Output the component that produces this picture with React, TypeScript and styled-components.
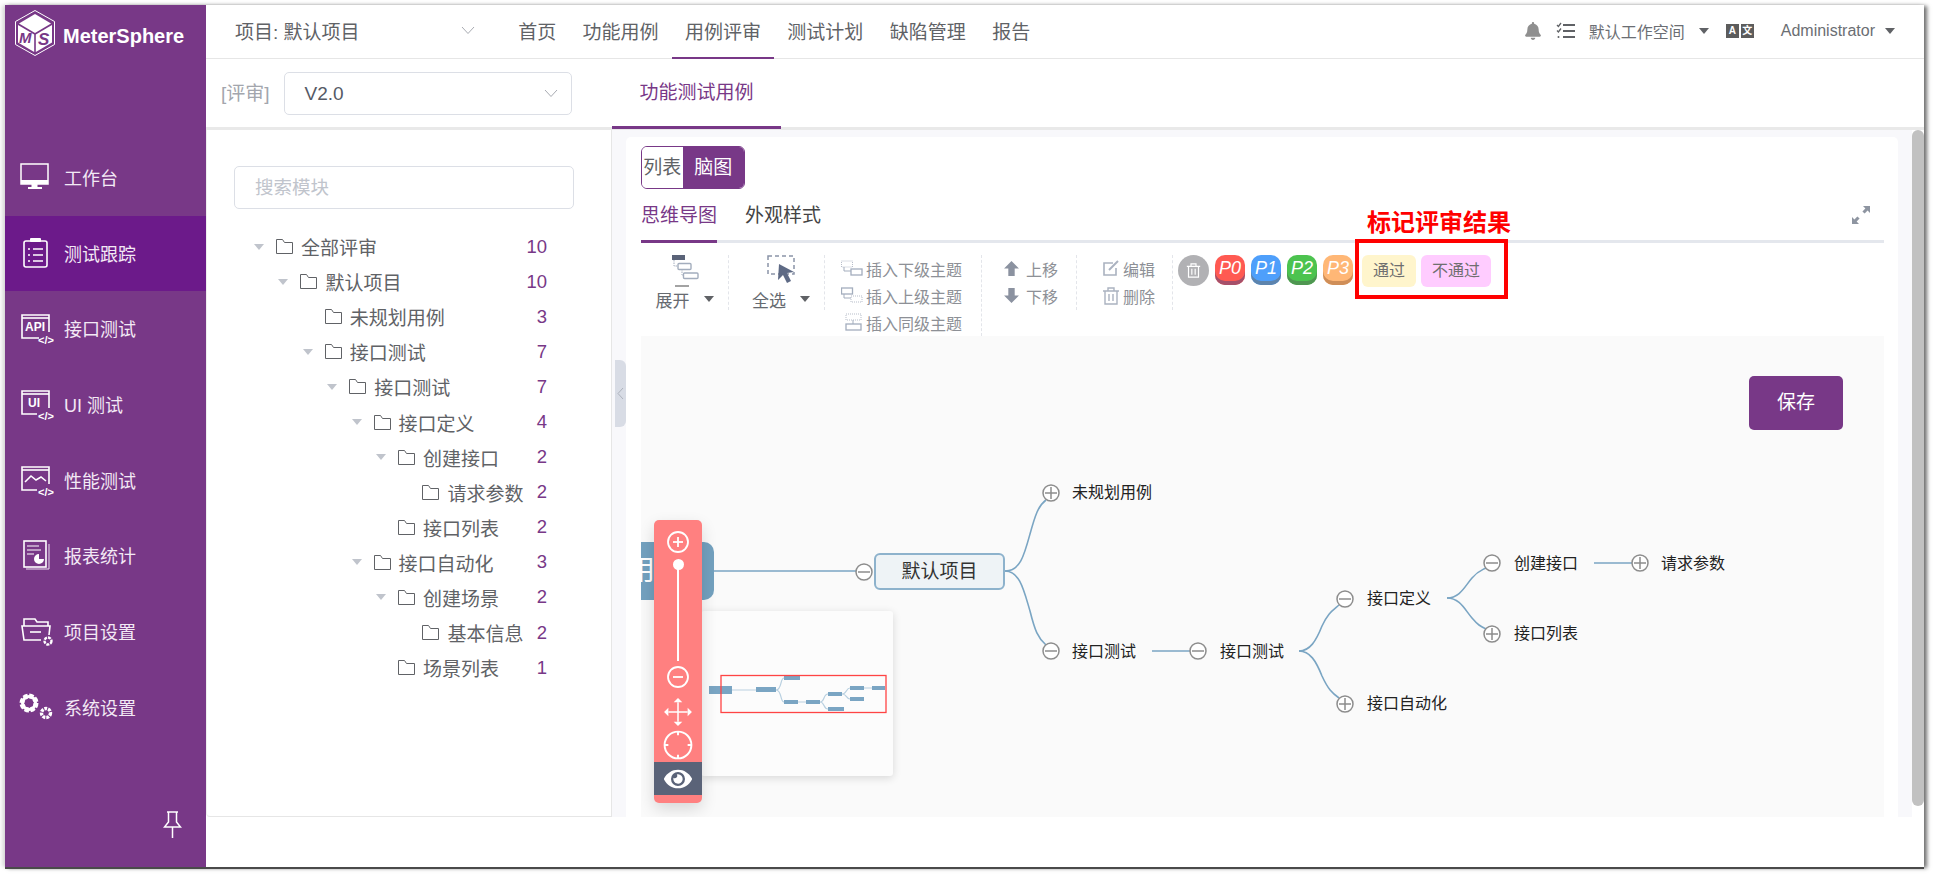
import React from "react";
import styled, { createGlobalStyle } from "styled-components";
import { FaBell, FaEye } from "react-icons/fa";

const PURPLE = "#783887";
const LINE = "#7aa5c3";

const GlobalStyle = createGlobalStyle`
  html, body { margin: 0; padding: 0; background: #fff; }
  body { font-family: "Liberation Sans", "Noto Sans CJK SC", sans-serif; color: #606266; }
  * { box-sizing: border-box; }
`;

const Page = styled.div`
  width: 1933px;
  height: 876px;
  padding: 5px 9px 9px 5px;
  background: #fff;
  overflow: hidden;
`;

const Frame = styled.div`
  display: flex;
  width: 1919px;
  height: 862px;
  background: #fff;
  box-shadow: 0 2px 0 #4a4a4a, 3px 1px 4px #6f6f6f, -3px 0 4px #dcdcdc;
`;

/* sidebar */
const Sidebar = styled.aside`
  width: 201px;
  flex: none;
  display: flex;
  flex-direction: column;
  background: ${PURPLE};
`;

const LogoRow = styled.div`
  height: 135px;
  flex: none;
  display: flex;
  align-items: flex-start;
  padding: 5px 0 0 10px;
  gap: 8px;
`;

const LogoText = styled.span`
  font-size: 20px;
  font-weight: 700;
  color: #fff;
  line-height: 54px;
  margin-top: -1px;
`;

const MenuItem = styled.div<{ $active?: boolean }>`
  height: 75.7px;
  flex: none;
  display: flex;
  align-items: center;
  gap: 10px;
  padding: 0 0 2px 12px;
  font-size: 18px;
  color: #f3e9f5;
  background: ${(p) => (p.$active ? "#6c1a8a" : "transparent")};
`;

const PinBox = styled.div`
  margin-top: auto;
  align-self: flex-end;
  padding: 0 24px 28px 0;
  height: 56px;
`;

/* main column */
const Main = styled.div`
  flex: 1;
  min-width: 0;
  display: flex;
  flex-direction: column;
`;

const Header = styled.header`
  height: 54px;
  flex: none;
  display: flex;
  align-items: stretch;
  border-bottom: 1px solid #e6e6e6;
`;

const ProjectPick = styled.div`
  width: 299px;
  display: flex;
  align-items: center;
  justify-content: space-between;
  padding: 0 30px 2px 29px;
  font-size: 19px;
`;

const NavItem = styled.div<{ $active?: boolean }>`
  padding: 0 13.2px 2px;
  display: flex;
  align-items: center;
  font-size: 19px;
  margin-bottom: -1px;
  color: #606266;
  border-bottom: 2px solid ${(p) => (p.$active ? PURPLE : "transparent")};
`;

const HeaderRight = styled.div`
  margin-left: auto;
  display: flex;
  align-items: center;
  font-size: 16px;
  color: #6b6e73;
  padding: 0 29px 2px 0;
`;

const Caret = styled.i<{ $gap?: number }>`
  display: inline-block;
  width: 0;
  height: 0;
  margin-left: ${(p) => p.$gap ?? 0}px;
  border-left: 5.5px solid transparent;
  border-right: 5.5px solid transparent;
  border-top: 6px solid #606266;
`;

const LangBox = styled.div`
  display: flex;
  gap: 2px;
  margin: 0 27px 0 17px;
`;

const LangCell = styled.span`
  width: 13px;
  height: 14px;
  background: #5c5c5c;
  color: #fff;
  font-size: 10px;
  font-weight: 700;
  line-height: 14px;
  text-align: center;
`;

const SubBar = styled.div`
  height: 71px;
  flex: none;
  display: flex;
  border-bottom: 3px solid #e9e9e9;
`;

const VersionArea = styled.div`
  width: 406px;
  display: flex;
  align-items: flex-start;
  padding: 13px 0 0 15px;
  gap: 14px;
`;

const VersionLabel = styled.span`
  font-size: 19px;
  line-height: 43px;
  color: #a3a6ad;
`;

const VersionSelect = styled.div`
  width: 288px;
  height: 43px;
  display: flex;
  align-items: center;
  justify-content: space-between;
  padding: 0 13px 0 20px;
  border: 1px solid #dcdfe6;
  border-radius: 5px;
  font-size: 19px;
  color: #555a66;
`;

const SubTab = styled.div`
  width: 169px;
  height: 70px;
  margin-bottom: -2px;
  display: flex;
  align-items: center;
  justify-content: center;
  padding-bottom: 4px;
  font-size: 19px;
  color: ${PURPLE};
  border-bottom: 3px solid ${PURPLE};
`;

const Body = styled.div`
  flex: 1;
  display: flex;
  align-items: flex-start;
  position: relative;
`;

/* left tree */
const TreePanel = styled.section`
  width: 406px;
  height: 687px;
  flex: none;
  padding: 36px 37px 0 27px;
  border-right: 1px solid #e6e6e6;
  border-bottom: 1px solid #e6e6e6;
  border-left: 1px solid #eeeeee;
  border-bottom-left-radius: 4px;
`;

const SearchBox = styled.div`
  height: 43px;
  padding-left: 20px;
  border: 1px solid #dcdfe6;
  border-radius: 5px;
  font-size: 18.5px;
  line-height: 41px;
  color: #c0c4cc;
`;

const Tree = styled.div`
  margin-top: 20px;
  padding-right: 27px;
`;

const TreeRow = styled.div<{ $level: number }>`
  height: 35.1px;
  display: flex;
  align-items: center;
  padding-left: ${(p) => 20 + p.$level * 24.4}px;
  font-size: 19px;
`;

const TreeArrow = styled.i<{ $hidden?: boolean }>`
  width: 0;
  height: 0;
  flex: none;
  margin-right: 12px;
  border-left: 5.5px solid transparent;
  border-right: 5.5px solid transparent;
  border-top: 6px solid ${(p) => (p.$hidden ? "transparent" : "#c0c4cc")};
`;

const TreeName = styled.span`
  margin-left: 8px;
  white-space: nowrap;
`;

const TreeCount = styled.span`
  margin-left: auto;
  color: ${PURPLE};
  font-size: 18.5px;
`;

const CollapseHandle = styled.div`
  position: absolute;
  left: 409px;
  top: 230px;
  width: 11px;
  height: 67px;
  display: flex;
  align-items: center;
  justify-content: center;
  background: #d8dce5;
  border-radius: 0 6px 6px 0;
`;

/* right side */
const CardWrap = styled.section`
  flex: 1;
  min-width: 0;
  height: 687px;
  padding: 7px 14px 0 14px;
  background: #f8f8fb;
`;

const Card = styled.div`
  height: 680px;
  display: flex;
  flex-direction: column;
  padding: 9px 14px 0 15px;
  background: #fff;
  border-radius: 5px 5px 0 0;
`;

const Toggle = styled.div`
  width: 104px;
  height: 43px;
  flex: none;
  display: flex;
  border: 1px solid ${PURPLE};
  border-radius: 6px;
  overflow: hidden;
  font-size: 19px;
  line-height: 41px;
`;

const ToggleOption = styled.span<{ $on?: boolean }>`
  text-align: center;
  width: ${(p) => (p.$on ? 62 : 41)}px;
  color: ${(p) => (p.$on ? "#fff" : "#606266")};
  background: ${(p) => (p.$on ? PURPLE : "#fff")};
`;

const TabRow = styled.div`
  height: 54px;
  flex: none;
  display: flex;
  align-items: center;
  gap: 28px;
  padding-right: 14px;
  border-bottom: 3px solid #e4e7ed;
`;

const MapTab = styled.div<{ $on?: boolean }>`
  height: 54px;
  margin-bottom: -3px;
  display: flex;
  align-items: center;
  padding-bottom: 3px;
  font-size: 19px;
  color: ${(p) => (p.$on ? PURPLE : "#444")};
  border-bottom: 3px solid ${(p) => (p.$on ? PURPLE : "transparent")};
`;

const ExpandIcon = styled.div`
  margin-left: auto;
  display: flex;
`;

const Toolbar = styled.div`
  height: 93px;
  flex: none;
  display: flex;
  align-items: flex-start;
  position: relative;
  padding-top: 12px;
  font-size: 16px;
  color: #8d9096;
`;

const ToolGroup = styled.div<{ $w: number; $tall?: boolean }>`
  width: ${(p) => p.$w}px;
  height: ${(p) => (p.$tall ? 81 : 55)}px;
  flex: none;
  border-right: 1px dashed #e3e5ea;
`;

const BigTool = styled(ToolGroup)<{ $shift?: number }>`
  display: flex;
  flex-direction: column;
  align-items: center;
  padding-left: ${(p) => p.$shift ?? 0}px;
  font-size: 17px;
  color: #666a70;
`;

const BigToolLabel = styled.div`
  display: flex;
  align-items: center;
  gap: 14px;
  height: 20px;
  margin-top: 1px;
`;

const InsertGroup = styled(ToolGroup)`
  display: flex;
  flex-direction: column;
  align-items: flex-end;
  padding: 0 19px 0 0;
`;

const ToolLine = styled.div`
  height: 27px;
  display: flex;
  align-items: center;
  gap: 3px;
  white-space: nowrap;
`;

const MoveGroup = styled(ToolGroup)<{ $shift: number }>`
  display: flex;
  flex-direction: column;
  align-items: center;
  padding: 0 0 0 ${(p) => p.$shift}px;
`;

const PriorityRow = styled.div`
  display: flex;
  align-items: flex-start;
  padding-left: 5px;
  gap: 6px;
`;

const TrashButton = styled.div`
  width: 31px;
  height: 31px;
  border-radius: 50%;
  background: #b1b1b4;
  display: flex;
  align-items: center;
  justify-content: center;
`;

const PriorityTag = styled.div<{ $bg: string; $edge: string }>`
  width: 30px;
  height: 30px;
  border-radius: 10px;
  background: ${(p) => p.$bg};
  box-shadow: inset 0 -4px 0 ${(p) => p.$edge};
  color: #fff;
  font-size: 18px;
  font-style: italic;
  line-height: 26px;
  text-align: center;
`;

const ResultTag = styled.div<{ $bg: string; $w: number; $gap: number }>`
  width: ${(p) => p.$w}px;
  height: 32px;
  margin-left: ${(p) => p.$gap}px;
  background: ${(p) => p.$bg};
  border-radius: 6px;
  font-size: 16px;
  line-height: 32px;
  text-align: center;
  color: #6f6f6f;
`;

const NoteBox = styled.div`
  position: absolute;
  left: 714px;
  top: -4px;
  width: 153px;
  height: 60px;
  border: 4px solid #ff0000;
`;

const NoteTitle = styled.div`
  position: absolute;
  left: 726px;
  top: -35px;
  font-size: 24px;
  line-height: 30px;
  font-weight: 700;
  color: #ff0000;
  white-space: nowrap;
`;

/* mind map canvas */
const Canvas = styled.div`
  flex: 1;
  position: relative;
  overflow: hidden;
  background: #fafafa;
`;

const Wires = styled.svg`
  position: absolute;
  left: 0;
  top: 0;
`;

const SaveButton = styled.div`
  position: absolute;
  right: 41px;
  top: 40px;
  width: 94px;
  height: 54px;
  border-radius: 5px;
  background: ${PURPLE};
  color: #fff;
  font-size: 19px;
  line-height: 54px;
  text-align: center;
`;

const RootNode = styled.div`
  position: absolute;
  left: 0;
  top: 206px;
  width: 73px;
  height: 58px;
  overflow: hidden;
  background: #73a1bf;
  border-radius: 0 10px 10px 0;
`;

const RootText = styled.span`
  position: absolute;
  left: -14px;
  top: 11px;
  font-size: 28px;
  line-height: 36px;
  color: #fff;
`;

const ProjectNode = styled.div`
  position: absolute;
  left: 233px;
  top: 217px;
  width: 131px;
  height: 37px;
  background: #eef3f6;
  border: 2px solid #8db2cc;
  border-radius: 6px;
  font-size: 19px;
  line-height: 33px;
  text-align: center;
  color: #333;
`;

const MapLabel = styled.span<{ $x: number; $y: number }>`
  position: absolute;
  left: ${(p) => p.$x - 641}px;
  top: ${(p) => p.$y - 336 - 11}px;
  font-size: 16px;
  line-height: 24px;
  color: #222;
  white-space: nowrap;
`;

const ZoomBar = styled.div`
  position: absolute;
  left: 13px;
  top: 184px;
  width: 48px;
  height: 283px;
  z-index: 2;
  display: flex;
  flex-direction: column;
  align-items: center;
  padding-top: 11px;
  background: #ff8080;
  border-radius: 5px;
  box-shadow: 0 6px 16px rgba(0, 0, 0, 0.14);
`;

const ZoomSlider = styled.div`
  position: relative;
  width: 2px;
  height: 101px;
  margin: 7px 0 5px;
  background: #fff;
`;

const ZoomKnob = styled.span`
  position: absolute;
  left: -4.5px;
  top: -1px;
  width: 11px;
  height: 11px;
  border-radius: 50%;
  background: #fff;
`;

const ZoomIcon = styled.svg<{ $top?: number }>`
  flex: none;
  margin-top: ${(p) => p.$top ?? 0}px;
`;

const EyeBar = styled.div`
  width: 100%;
  height: 33px;
  margin-top: 2px;
  display: flex;
  align-items: center;
  justify-content: center;
  background: #5a6378;
  color: #fff;
`;

const MiniMap = styled.div`
  position: absolute;
  left: 60px;
  top: 275px;
  width: 192px;
  height: 165px;
  background: #fcfcfc;
  border-radius: 3px;
  box-shadow: 0 2px 8px rgba(0, 0, 0, 0.14);
`;

const ScrollTrack = styled.div`
  width: 12px;
  height: 676px;
  flex: none;
  background: #c1c1c1;
  border-radius: 6px;
`;

/* drawings */
const S = { fill: "none", stroke: "#fff", strokeWidth: 1.6 };

const Logo = () => (
  <svg width="40" height="46" viewBox="0 0 40 46">
    <polygon points="20,0.5 39.5,11.5 39.5,34.5 20,45.5 0.5,34.5 0.5,11.5" fill="none" stroke="#fff" strokeWidth="1" />
    <polygon points="20,4 36,13.5 20,23 4,13.5" fill="#fff" />
    <polygon points="3,15 19.2,24.5 19.2,42 3,32.5" fill="#fff" />
    <polygon points="37,15 20.8,24.5 20.8,42 37,32.5" fill="#fff" />
    <text x="4" y="33" fontSize="15" fontWeight="700" fontStyle="italic" fill={PURPLE} fontFamily="Liberation Sans">M</text>
    <text x="23" y="35" fontSize="17" fontWeight="700" fontStyle="italic" fill={PURPLE} fontFamily="Liberation Sans">S</text>
  </svg>
);

const CodeTag = () => (
  <text x="29" y="34" textAnchor="middle" fontSize="11" fontWeight="700" fill="#fff" stroke="none">&lt;/&gt;</text>
);

const icons: Record<string, React.ReactNode> = {
  desk: (
    <>
      <rect x="4" y="5" width="27" height="20" fill="none" stroke="#fff" strokeWidth="1.5" />
      <rect x="4" y="21" width="27" height="4" fill="#fff" />
      <rect x="14.5" y="25" width="6" height="3" fill="#fff" />
      <rect x="11" y="28" width="14" height="2" fill="#fff" />
    </>
  ),
  track: (
    <>
      <rect x="7" y="6" width="23" height="26" rx="2" {...S} />
      <rect x="13" y="3" width="11" height="4" rx="1" fill="#fff" />
      <path d="M11 14h2M16 14h10M11 20h2M16 20h10M11 26h2M16 26h10" {...S} strokeWidth="1.4" />
    </>
  ),
  api: (
    <>
      <path d="M22 28H5V5h27v17" {...S} />
      <path d="M5 8h27" {...S} />
      <text x="18" y="21" textAnchor="middle" fontSize="12" fontWeight="700" fill="#fff">API</text>
      <CodeTag />
    </>
  ),
  ui: (
    <>
      <path d="M20 28H5V5h27v17" {...S} />
      <path d="M5 8h27" {...S} />
      <text x="17" y="21" textAnchor="middle" fontSize="12" fontWeight="700" fill="#fff">UI</text>
      <CodeTag />
    </>
  ),
  perf: (
    <>
      <path d="M20 28H5V5h27v17" {...S} />
      <path d="M5 8h27" {...S} />
      <path d="M8 20l6-6 5 4 5-3 5 4" {...S} />
      <CodeTag />
    </>
  ),
  report: (
    <>
      <path d="M32 7v25H9" fill="none" stroke="#ecdff0" strokeWidth="1" />
      <rect x="7" y="4" width="22" height="26" {...S} />
      <path d="M10 9h12M10 13h14M10 17h7" {...S} strokeWidth="1.2" />
      <path d="M22 17a5 5 0 1 0 5 5h-5z" fill="#fff" />
    </>
  ),
  project: (
    <>
      <path d="M24 27H7L5 13h28l-1 9" {...S} />
      <path d="M7 13V6h11l2 3h11v4" {...S} />
      <path d="M13 19h11" {...S} />
      <circle cx="31" cy="28" r="3.5" fill="none" stroke="#fff" strokeWidth="2.4" strokeDasharray="3 1" />
    </>
  ),
  system: (
    <>
      <circle cx="12" cy="14" r="7" fill="none" stroke="#fff" strokeWidth="5" strokeDasharray="4 1.5" />
      <circle cx="12" cy="14" r="6.5" fill="none" stroke="#fff" strokeWidth="3" />
      <circle cx="29" cy="24" r="4.5" fill="none" stroke="#fff" strokeWidth="3.4" strokeDasharray="2.8 1" />
    </>
  ),
};

const SideIcon = ({ kind }: { kind: string }) => (
  <svg width="37" height="36" viewBox="0 0 37 36" fontFamily="Liberation Sans">{icons[kind]}</svg>
);

const Pin = () => (
  <svg width="19" height="28" viewBox="0 0 19 28" fill="none" stroke="#fff" strokeWidth="1.5">
    <path d="M4 1h11M5.5 1v10L1.5 16h16l-4-5V1M9.5 16v11" />
  </svg>
);

const Chevron = ({ color = "#a8abb2" }: { color?: string }) => (
  <svg width="14" height="9" viewBox="0 0 14 9" fill="none" stroke={color} strokeWidth="1">
    <path d="M1 1l6 6.5L13 1" />
  </svg>
);

const FolderSvg = styled.svg`
  flex: none;
`;

const Folder = () => (
  <FolderSvg width="17" height="15" viewBox="0 0 17 15" fill="none" stroke="#606266" strokeWidth="1">
    <path d="M.5 14.5V.5h6l2 3h8v11z" />
  </FolderSvg>
);

const ChecklistSvg = styled.svg`
  margin: 0 13px 0 14px;
`;

const ChecklistIcon = () => (
  <ChecklistSvg width="20" height="17" viewBox="0 0 20 17" fill="none" stroke="#606266" strokeWidth="2">
    <path d="M7 3h12M7 9h12M7 15h12" />
    <path d="M1 3l1.4 1.4L5 1" strokeWidth="1.3" />
    <path d="M1 8.5l1.4 1.4L5 6.5" strokeWidth="1.3" />
    <circle cx="2.5" cy="15" r="1" fill="#606266" stroke="none" />
  </ChecklistSvg>
);

const Fullscreen = () => (
  <svg width="18" height="18" viewBox="0 0 18 18" fill="#8e95a1">
    <path d="M11 0h7v7l-2.4-2.4-3 3-2.2-2.2 3-3zM0 18v-7l2.4 2.4 3-3 2.2 2.2-3 3L7 18z" />
  </svg>
);

const TreeLayoutIcon = () => (
  <svg width="28" height="33" viewBox="0 0 28 33" fill="none">
    <rect x="1" y="0" width="13" height="5" fill="#5a6378" />
    <path d="M3 5v6h4M11 14v6l1 1" stroke="#a3adbd" strokeWidth="1" strokeDasharray="1.5 1" />
    <rect x="7" y="8.5" width="13" height="6" rx="1" stroke="#a3adbd" strokeWidth="1.4" />
    <rect x="12.5" y="18" width="14.5" height="5.5" rx="1" stroke="#a3adbd" strokeWidth="1.4" />
    <path d="M4 31h14" stroke="#666" strokeWidth="1.2" />
  </svg>
);

const SelectAllIcon = () => (
  <svg width="28" height="33" viewBox="0 0 28 33" fill="none">
    <rect x="1" y="1" width="26" height="18" stroke="#8b94a8" strokeWidth="1.5" strokeDasharray="4 3" />
    <path d="M12 9l15 8-7 1 4 8-4 2-4-8-5 5z" fill="#5e6a85" />
  </svg>
);

const InsertIcon = ({ kind }: { kind: "child" | "parent" | "sibling" }) => {
  const dotted = { stroke: "#b7bdc9", strokeWidth: 1, strokeDasharray: "1 1", fill: "none" };
  const solid = { stroke: "#a3adbd", strokeWidth: 1.3, fill: "none" };
  return (
    <svg width="22" height="19" viewBox="0 0 22 19">
      {kind === "child" && (
        <>
          <rect x="0.5" y="2" width="11" height="6" {...dotted} />
          <path d="M3 8v4h7" stroke="#a3adbd" fill="none" />
          <rect x="10" y="10" width="11" height="6" {...solid} />
        </>
      )}
      {kind === "parent" && (
        <>
          <rect x="0.5" y="2" width="11" height="6" {...solid} />
          <path d="M3 8v4h7" stroke="#a3adbd" fill="none" />
          <rect x="10" y="10" width="11" height="6" {...dotted} />
        </>
      )}
      {kind === "sibling" && (
        <>
          <rect x="5" y="1" width="15" height="6" {...dotted} />
          <path d="M12 7v4" stroke="#a3adbd" />
          <rect x="5" y="11" width="15" height="6" {...solid} />
        </>
      )}
    </svg>
  );
};

const MoveSvg = styled.svg`
  margin-right: 3px;
`;

const MoveArrow = ({ down }: { down?: boolean }) => (
  <MoveSvg width="17" height="17" viewBox="0 0 16 16" fill="#8b92a0">
    <path d={down ? "M5 1h6v7h4l-7 7-7-7h4z" : "M5 15h6V8h4L8 1 1 8h4z"} />
  </MoveSvg>
);

const EditIcon = () => (
  <svg width="18" height="17" viewBox="0 0 18 17" fill="none" stroke="#aab2c0" strokeWidth="1.6">
    <path d="M11 3H2v12h12V8" />
    <path d="M7 10l9-9" strokeWidth="2" />
  </svg>
);

const BinIcon = ({ color = "#aab2c0", size = 18 }: { color?: string; size?: number }) => (
  <svg width={size} height={size} viewBox="0 0 18 18" fill="none" stroke={color} strokeWidth="1.4">
    <path d="M1 4h16M6 4V1h6v3M3 4v13h12V4M7 7v7M11 7v7" />
  </svg>
);

const Expander = ({ x, y, plus }: { x: number; y: number; plus?: boolean }) => (
  <g stroke="#8d8d8d" strokeWidth="1.5">
    <circle cx={x} cy={y} r="8" fill="#fff" />
    <path d={`M${x - 6} ${y}h12`} />
    {plus && <path d={`M${x} ${y - 6}v12`} />}
  </g>
);

const ZoomCircle = ({ plus }: { plus?: boolean }) => (
  <svg width="22" height="22" viewBox="0 0 22 22" fill="none" stroke="#fff" strokeWidth="1.8">
    <circle cx="11" cy="11" r="10" />
    <path d="M6 11h10" />
    {plus && <path d="M11 6v10" />}
  </svg>
);

const miniNodes = [
  [709, 686, 23, 8], [756, 687, 20, 5], [784, 676, 16, 4], [784, 700, 14, 4], [806, 700, 14, 4],
  [828, 692, 14, 4], [828, 707, 16, 4], [850, 686, 14, 4], [850, 697, 14, 4], [872, 686, 13, 4],
];

const tree = [
  { level: 0, name: "全部评审", count: 10, open: true },
  { level: 1, name: "默认项目", count: 10, open: true },
  { level: 2, name: "未规划用例", count: 3 },
  { level: 2, name: "接口测试", count: 7, open: true },
  { level: 3, name: "接口测试", count: 7, open: true },
  { level: 4, name: "接口定义", count: 4, open: true },
  { level: 5, name: "创建接口", count: 2, open: true },
  { level: 6, name: "请求参数", count: 2 },
  { level: 5, name: "接口列表", count: 2 },
  { level: 4, name: "接口自动化", count: 3, open: true },
  { level: 5, name: "创建场景", count: 2, open: true },
  { level: 6, name: "基本信息", count: 2 },
  { level: 5, name: "场景列表", count: 1 },
];

const menu = [
  ["desk", "工作台"],
  ["track", "测试跟踪"],
  ["api", "接口测试"],
  ["ui", "UI 测试"],
  ["perf", "性能测试"],
  ["report", "报表统计"],
  ["project", "项目设置"],
  ["system", "系统设置"],
];

const mapLabels: [number, number, string][] = [
  [1072, 492, "未规划用例"],
  [1072, 651, "接口测试"],
  [1220, 651, "接口测试"],
  [1367, 598, "接口定义"],
  [1367, 703, "接口自动化"],
  [1514, 563, "创建接口"],
  [1514, 633, "接口列表"],
  [1661, 563, "请求参数"],
];

export default function App() {
  return (
    <Page>
      <GlobalStyle />
      <Frame>
        <Sidebar>
          <LogoRow>
            <Logo />
            <LogoText>MeterSphere</LogoText>
          </LogoRow>
          {menu.map(([kind, label], i) => (
            <MenuItem key={kind} $active={i === 1}>
              <SideIcon kind={kind} />
              {label}
            </MenuItem>
          ))}
          <PinBox>
            <Pin />
          </PinBox>
        </Sidebar>

        <Main>
          <Header>
            <ProjectPick>
              <span>项目: 默认项目</span>
              <Chevron />
            </ProjectPick>
            <NavItem>首页</NavItem>
            <NavItem>功能用例</NavItem>
            <NavItem $active>用例评审</NavItem>
            <NavItem>测试计划</NavItem>
            <NavItem>缺陷管理</NavItem>
            <NavItem>报告</NavItem>
            <HeaderRight>
              <FaBell size={18} color="#8f8f8f" />
              <ChecklistIcon />
              默认工作空间
              <Caret $gap={14} />
              <LangBox>
                <LangCell>A</LangCell>
                <LangCell>文</LangCell>
              </LangBox>
              Administrator
              <Caret $gap={10} />
            </HeaderRight>
          </Header>

          <SubBar>
            <VersionArea>
              <VersionLabel>[评审]</VersionLabel>
              <VersionSelect>
                V2.0
                <Chevron />
              </VersionSelect>
            </VersionArea>
            <SubTab>功能测试用例</SubTab>
          </SubBar>

          <Body>
            <TreePanel>
              <SearchBox>搜索模块</SearchBox>
              <Tree>
                {tree.map((n, i) => (
                  <TreeRow key={i} $level={n.level}>
                    <TreeArrow $hidden={!n.open} />
                    <Folder />
                    <TreeName>{n.name}</TreeName>
                    <TreeCount>{n.count}</TreeCount>
                  </TreeRow>
                ))}
              </Tree>
            </TreePanel>
            <CollapseHandle>
              <svg width="7" height="13" viewBox="0 0 7 13" fill="none" stroke="#aeb3bd" strokeWidth="1">
                <path d="M6 1L1 6.5 6 12" />
              </svg>
            </CollapseHandle>

            <CardWrap>
              <Card>
                <Toggle>
                  <ToggleOption>列表</ToggleOption>
                  <ToggleOption $on>脑图</ToggleOption>
                </Toggle>
                <TabRow>
                  <MapTab $on>思维导图</MapTab>
                  <MapTab>外观样式</MapTab>
                  <ExpandIcon>
                    <Fullscreen />
                  </ExpandIcon>
                </TabRow>

                <Toolbar>
                  <BigTool $w={88}>
                    <TreeLayoutIcon />
                    <BigToolLabel>
                      展开
                      <Caret />
                    </BigToolLabel>
                  </BigTool>
                  <BigTool $w={96} $shift={9}>
                    <SelectAllIcon />
                    <BigToolLabel>
                      全选
                      <Caret />
                    </BigToolLabel>
                  </BigTool>
                  <InsertGroup $w={157} $tall>
                    <ToolLine>
                      <InsertIcon kind="child" />
                      插入下级主题
                    </ToolLine>
                    <ToolLine>
                      <InsertIcon kind="parent" />
                      插入上级主题
                    </ToolLine>
                    <ToolLine>
                      <InsertIcon kind="sibling" />
                      插入同级主题
                    </ToolLine>
                  </InsertGroup>
                  <MoveGroup $w={95} $shift={3}>
                    <ToolLine>
                      <MoveArrow />
                      上移
                    </ToolLine>
                    <ToolLine>
                      <MoveArrow down />
                      下移
                    </ToolLine>
                  </MoveGroup>
                  <MoveGroup $w={96} $shift={8}>
                    <ToolLine>
                      <EditIcon />
                      编辑
                    </ToolLine>
                    <ToolLine>
                      <BinIcon />
                      删除
                    </ToolLine>
                  </MoveGroup>
                  <PriorityRow>
                    <TrashButton>
                      <BinIcon color="#fff" size={15} />
                    </TrashButton>
                    <PriorityTag $bg="#ff5a52" $edge="#a5506a">P0</PriorityTag>
                    <PriorityTag $bg="#4e9ffb" $edge="#5d84ad">P1</PriorityTag>
                    <PriorityTag $bg="#4cc34f" $edge="#4f9651">P2</PriorityTag>
                    <PriorityTag $bg="#ffb776" $edge="#cf8e58">P3</PriorityTag>
                    <ResultTag $bg="#fff5cc" $w={54} $gap={3}>通过</ResultTag>
                    <ResultTag $bg="#ffccff" $w={70} $gap={-1}>不通过</ResultTag>
                  </PriorityRow>
                  <NoteBox />
                  <NoteTitle>标记评审结果</NoteTitle>
                </Toolbar>

                <Canvas>
                  <Wires width="1243" height="481" viewBox="641 335 1243 481" fill="none">
                    <g stroke={LINE} strokeWidth="1.6">
                      <path d="M714 570H858" />
                      <path d="M1005 570C1020 570 1024 555 1030 533C1035 515 1038 505 1046 499" />
                      <path d="M1005 570C1020 570 1024 590 1030 610C1035 630 1038 637 1046 644" />
                      <path d="M1152 650H1192" />
                      <path d="M1299 650C1310 650 1316 640 1322 625C1328 612 1332 610 1339 604" />
                      <path d="M1299 650C1310 650 1316 660 1322 675C1328 688 1332 692 1339 697" />
                      <path d="M1447 597C1460 597 1465 585 1472 577C1478 570 1480 570 1486 567" />
                      <path d="M1447 597C1460 597 1465 609 1472 617C1478 624 1480 625 1486 628" />
                      <path d="M1594 562H1634" />
                    </g>
                    <Expander x={864} y={571} />
                    <Expander x={1051} y={492} plus />
                    <Expander x={1051} y={650} />
                    <Expander x={1198} y={650} />
                    <Expander x={1345} y={598} />
                    <Expander x={1345} y={703} plus />
                    <Expander x={1492} y={562} />
                    <Expander x={1492} y={633} plus />
                    <Expander x={1640} y={562} plus />
                  </Wires>
                  <RootNode>
                    <RootText>用</RootText>
                  </RootNode>
                  <ProjectNode>默认项目</ProjectNode>
                  {mapLabels.map(([x, y, text], i) => (
                    <MapLabel key={i} $x={x} $y={y}>{text}</MapLabel>
                  ))}
                  <SaveButton>保存</SaveButton>

                  <MiniMap>
                    <svg width="192" height="165" viewBox="701 611 192 165" fill="none">
                      <g stroke="#b9d0e0" strokeWidth="1.2">
                        <path d="M732 690H756M776 690C782 690 780 678 784 678M776 690C782 690 780 702 784 702M798 702H806M820 702C825 702 823 694 828 694M820 702C825 702 823 709 828 709M842 694C847 694 846 688 850 688M842 694C847 694 846 699 850 699M864 688H872" />
                      </g>
                      {miniNodes.map(([x, y, w, h], i) => (
                        <rect key={i} x={x} y={y} width={w} height={h} fill="#7aa5c3" />
                      ))}
                      <rect x="721" y="675.5" width="165" height="37" stroke="#ff4444" strokeWidth="1.3" />
                    </svg>
                  </MiniMap>

                  <ZoomBar>
                    <ZoomCircle plus />
                    <ZoomSlider>
                      <ZoomKnob />
                    </ZoomSlider>
                    <ZoomCircle />
                    <ZoomIcon $top={9} width="30" height="30" viewBox="0 0 28 28" fill="#fff">
                      <path d="M13.3 5h1.4v8.3H23v1.4h-8.3V23h-1.4v-8.3H5v-1.4h8.3z" />
                      <path d="M14 1l4 4h-8zM14 27l-4-4h8zM1 14l4-4v8zM27 14l-4 4v-8z" />
                    </ZoomIcon>
                    <ZoomIcon $top={3} width="30" height="30" viewBox="0 0 28 28" fill="none" stroke="#fff" strokeWidth="1.8">
                      <circle cx="14" cy="14" r="12.5" />
                      <path d="M14 1v4M14 23v4M1 14h4M23 14h4" />
                    </ZoomIcon>
                    <EyeBar>
                      <FaEye size={28} />
                    </EyeBar>
                  </ZoomBar>
                </Canvas>
              </Card>
            </CardWrap>
            <ScrollTrack />
          </Body>
        </Main>
      </Frame>
    </Page>
  );
}
